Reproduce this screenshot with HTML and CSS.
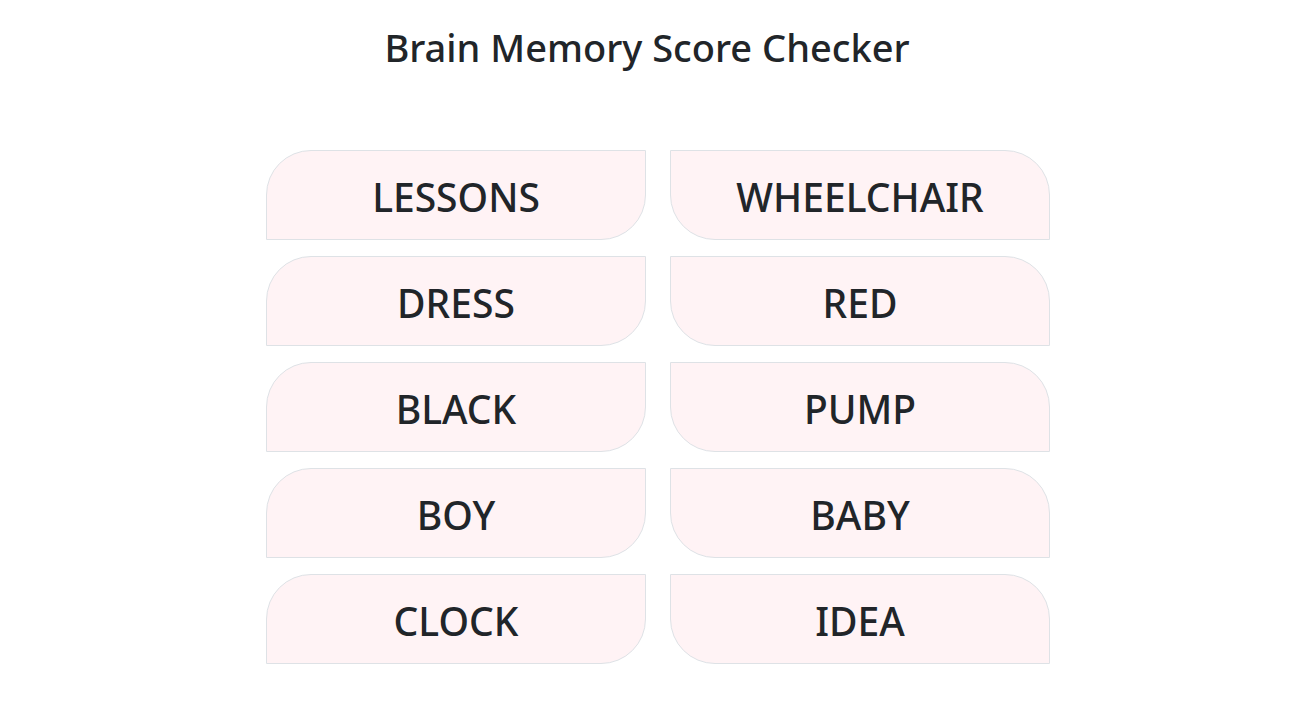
FILE: index.html
```html
<!DOCTYPE html>
<html lang="en">
<head>
<meta charset="utf-8">
<meta name="viewport" content="width=device-width, initial-scale=1">
<title>Brain Memory Score Checker</title>
<link rel="stylesheet" href="styles.css">
</head>
<body>
<main class="page">
<h1 class="title">Brain Memory Score Checker</h1>
<div class="board">
<ul class="words">
<li class="word">LESSONS</li>
<li class="word">WHEELCHAIR</li>
<li class="word">DRESS</li>
<li class="word">RED</li>
<li class="word">BLACK</li>
<li class="word">PUMP</li>
<li class="word">BOY</li>
<li class="word">BABY</li>
<li class="word">CLOCK</li>
<li class="word">IDEA</li>
</ul>
</div>
</main>
</body>
</html>
```

FILE: styles.css
```css
* {
  box-sizing: border-box;
}

body {
  margin: 0;
  background: #fff;
  color: #212529;
  font-family: "Segoe UI", "Noto Sans", "Open Sans", sans-serif;
}

.page {
  padding: 23px 16px 47px;
}

.title {
  margin: 0;
  font-size: 38px;
  font-weight: 500;
  line-height: 48px;
  text-align: center;
}

.board {
  padding: 79px 0 0 22px;
}

.words {
  display: grid;
  grid-template-columns: 1fr 1fr;
  gap: 16px 24px;
  max-width: 784px;
  margin: 0 auto;
  padding: 0;
  list-style: none;
}

.word {
  padding: 22px 16px 18px;
  border: 1px solid #dee2e6;
  border-radius: 45px 0;
  background: #fff3f5;
  font-size: 39px;
  font-weight: 500;
  line-height: 48px;
  text-align: center;
}

.word:nth-child(even) {
  border-radius: 0 45px;
}
```
